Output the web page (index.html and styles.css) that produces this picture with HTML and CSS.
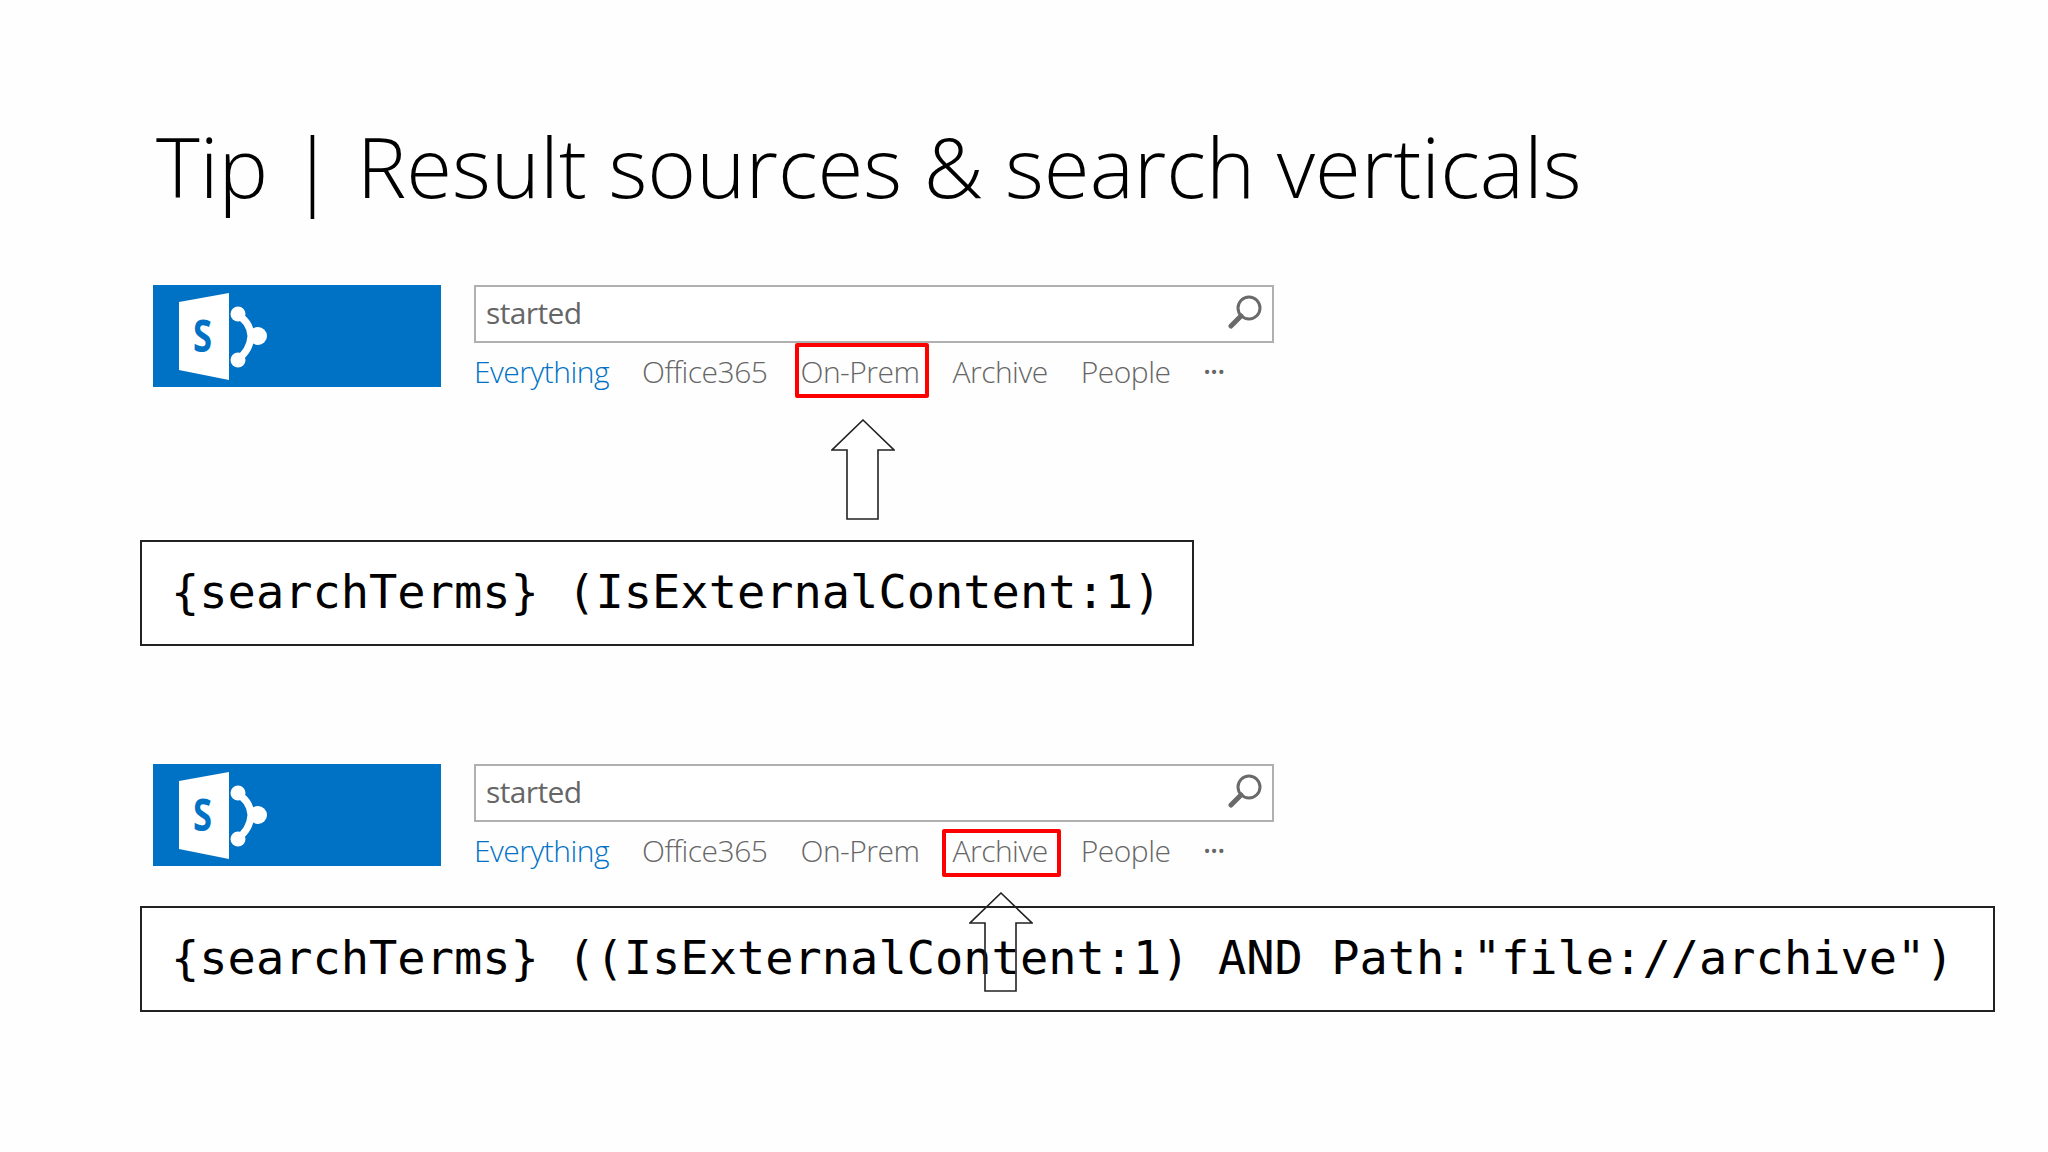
FILE: index.html
```html
<!DOCTYPE html>
<html lang="en">
<head>
<meta charset="utf-8">
<title>Tip | Result sources &amp; search verticals</title>
<link rel="stylesheet" href="styles.css">
</head>
<body>
<main class="slide">
  <h1 class="title">Tip | Result sources &amp; search verticals</h1>

  <section class="example example-first">
    <div class="header">
      <div class="logo">
        <svg class="logo-mark" viewBox="0 0 288 102" width="288" height="102" aria-hidden="true">
          <polygon class="door" points="26,17 76,8 76,95 26,85"/>
          <text class="door-letter" x="40" y="67" textLength="19" lengthAdjust="spacingAndGlyphs">S</text>
          <path class="link" d="M84 30 Q97 36 98 51 Q97 66 84 75"/>
          <circle class="node" cx="85" cy="29" r="7.5"/>
          <circle class="node" cx="105" cy="51" r="9"/>
          <circle class="node" cx="85" cy="75" r="7.5"/>
        </svg>
      </div>
      <div class="search">
        <div class="search-box">
          <span class="search-term">started</span>
          <svg class="search-icon" viewBox="0 0 34 34" width="34" height="34" aria-hidden="true">
            <circle class="lens" cx="21" cy="13" r="11"/>
            <path class="handle" d="M13 21 L3 31"/>
          </svg>
        </div>
        <nav class="tabs">
          <span class="tab tab-active">Everything</span>
          <span class="tab">Office365</span>
          <span class="tab">On-Prem</span>
          <span class="tab">Archive</span>
          <span class="tab">People</span>
          <span class="tab tab-more">&#8226;&#8226;&#8226;</span>
        </nav>
      </div>
    </div>
    <div class="mark mark-onprem"></div>
    <svg class="arrow arrow-onprem" viewBox="0 0 64 101" width="64" height="101" aria-hidden="true">
      <polygon points="32,1 63,31 47,31 47,100 16,100 16,31 1,31"/>
    </svg>
    <div class="query query-short">{searchTerms} (IsExternalContent:1)</div>
  </section>

  <section class="example example-second">
    <div class="header">
      <div class="logo">
        <svg class="logo-mark" viewBox="0 0 288 102" width="288" height="102" aria-hidden="true">
          <polygon class="door" points="26,17 76,8 76,95 26,85"/>
          <text class="door-letter" x="40" y="67" textLength="19" lengthAdjust="spacingAndGlyphs">S</text>
          <path class="link" d="M84 30 Q97 36 98 51 Q97 66 84 75"/>
          <circle class="node" cx="85" cy="29" r="7.5"/>
          <circle class="node" cx="105" cy="51" r="9"/>
          <circle class="node" cx="85" cy="75" r="7.5"/>
        </svg>
      </div>
      <div class="search">
        <div class="search-box">
          <span class="search-term">started</span>
          <svg class="search-icon" viewBox="0 0 34 34" width="34" height="34" aria-hidden="true">
            <circle class="lens" cx="21" cy="13" r="11"/>
            <path class="handle" d="M13 21 L3 31"/>
          </svg>
        </div>
        <nav class="tabs">
          <span class="tab tab-active">Everything</span>
          <span class="tab">Office365</span>
          <span class="tab">On-Prem</span>
          <span class="tab">Archive</span>
          <span class="tab">People</span>
          <span class="tab tab-more">&#8226;&#8226;&#8226;</span>
        </nav>
      </div>
    </div>
    <div class="mark mark-archive"></div>
    <div class="query query-long">{searchTerms} ((IsExternalContent:1) AND Path:"file://archive")</div>
    <svg class="arrow arrow-archive" viewBox="0 0 64 101" width="64" height="101" aria-hidden="true">
      <polygon points="32,1 63,31 47,31 47,99 16,99 16,31 1,31"/>
    </svg>
  </section>
</main>
</body>
</html>
```

FILE: styles.css
```css
* { box-sizing: border-box; }

html, body {
  margin: 0;
  padding: 0;
  background: #fefefe;
}

.slide {
  position: relative;
  width: 2048px;
  height: 1152px;
  overflow: hidden;
  padding: 106px 0 0 0;
  font-family: "Open Sans", "Noto Sans", sans-serif;
  color: #000;
}

.title {
  margin: 0 0 0 156px;
  height: 179px;
  font-size: 83.4px;
  line-height: 120px;
  font-weight: 300;
  white-space: nowrap;
}

.example {
  position: relative;
}

.example-first {
  height: 479px;
}

.header {
  display: flex;
  gap: 33px;
  margin-left: 153px;
}

.logo {
  width: 288px;
  height: 102px;
  background: #0072c6;
  flex: none;
}

.logo-mark {
  display: block;
}

.door { fill: #fff; }

.door-letter {
  fill: #0072c6;
  font-family: "Open Sans", sans-serif;
  font-weight: 700;
  font-size: 45px;
}

.link {
  fill: none;
  stroke: #fff;
  stroke-width: 7;
}

.node { fill: #fff; }

.search {
  width: 800px;
}

.search-box {
  display: flex;
  align-items: center;
  justify-content: space-between;
  height: 58px;
  padding: 0 10px 0 10px;
  border: 2px solid #b0b0b0;
  background: #fff;
}

.search-term {
  font-size: 30px;
  line-height: 36px;
  margin-top: -2px;
  font-weight: 400;
  color: #666;
  letter-spacing: -0.6px;
}

.search-icon {
  display: block;
  margin-top: -4px;
}

.lens {
  fill: none;
  stroke: #6a6a6a;
  stroke-width: 3;
}

.handle {
  fill: none;
  stroke: #6a6a6a;
  stroke-width: 5;
  stroke-linecap: round;
}

.tabs {
  display: flex;
  gap: 33px;
  margin-top: 7px;
  height: 44px;
  align-items: center;
}

.tab {
  font-size: 30px;
  line-height: 44px;
  font-weight: 300;
  color: #666;
  letter-spacing: -0.5px;
  white-space: nowrap;
}

.tab-active {
  color: #0072c6;
}

.tab-more {
  font-size: 19px;
  letter-spacing: 0;
  font-weight: 400;
}

.mark {
  position: absolute;
  border: 4px solid #f00;
  border-radius: 2px;
}

.mark-onprem {
  left: 795px;
  top: 58px;
  width: 134px;
  height: 55px;
}

.mark-archive {
  left: 942px;
  top: 65px;
  width: 119px;
  height: 48px;
}

.arrow {
  position: absolute;
  display: block;
  fill: #fff;
  stroke: #222;
  stroke-width: 1.6;
}

.arrow-onprem {
  left: 831px;
  top: 134px;
}

.arrow-archive {
  left: 969px;
  top: 128px;
  fill: none;
}

.query {
  border: 2px solid #222;
  background: #fff;
  height: 106px;
  margin-left: 140px;
  padding: 0 0 0 29px;
  font-family: "DejaVu Sans Mono", "Liberation Mono", monospace;
  font-size: 47px;
  line-height: 100px;
  color: #000;
  white-space: nowrap;
}

.query-short {
  width: 1054px;
  margin-top: 146px;
}

.query-long {
  width: 1855px;
  margin-top: 33px;
}
```
